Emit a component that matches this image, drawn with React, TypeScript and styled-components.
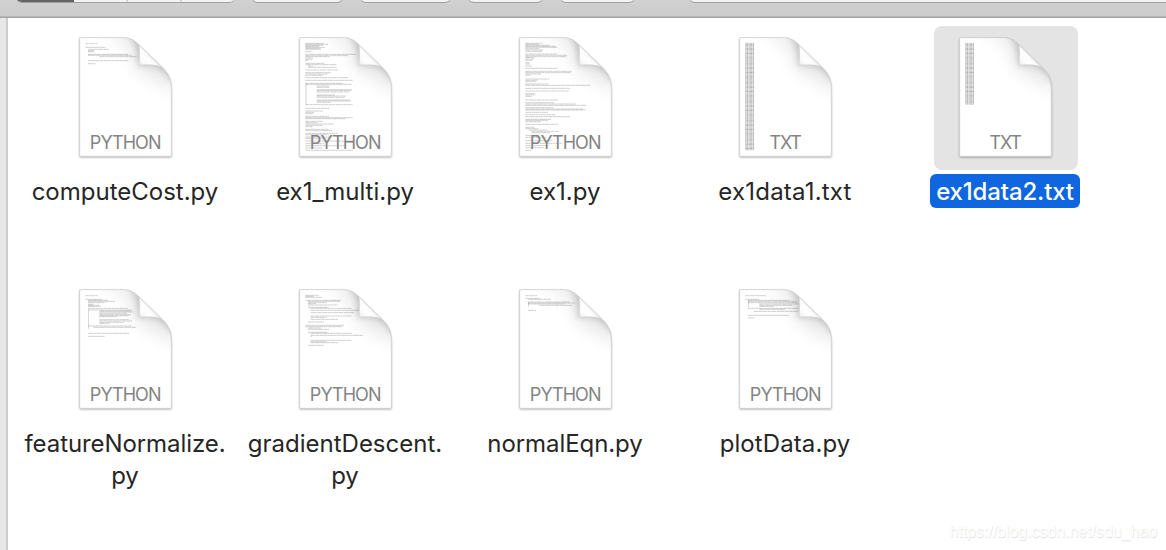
import React from 'react';
import styled, { createGlobalStyle, css } from 'styled-components';

const GlobalStyle = createGlobalStyle`
  *, *::before, *::after { box-sizing: border-box; }
  html, body { margin: 0; padding: 0; overflow: hidden; background: #fff; }
  body { font-family: Inter, "Liberation Sans", sans-serif; color: #262626; }
`;

const Window = styled.div`
  position: relative;
  display: flex;
  flex-direction: column;
  width: 1166px;
  height: 550px;
  overflow: hidden;
  background: #fff;
`;

const Toolbar = styled.header`
  display: flex;
  align-items: flex-start;
  flex: none;
  height: 18px;
  padding-left: 16px;
  overflow: hidden;
  background: linear-gradient(#d1d1d1, #cbcbcb);
  border-bottom: 1px solid #a3a3a3;
  box-shadow: inset 0 -1px 0 #b5b5b5;
`;

const ToolGroup = styled.div<{ $width: number; $gap: number }>`
  display: flex;
  flex: none;
  width: ${(p) => p.$width}px;
  height: 12px;
  margin-top: -10px;
  margin-right: ${(p) => p.$gap}px;
  border-radius: 7px;
  overflow: hidden;
  background: #f4f4f4;
  box-shadow: 0 1px 0 #a0a0a0, 0 0 0 0.5px #b4b4b4;
`;

const Segment = styled.div<{ $width: number; $active?: boolean }>`
  width: ${(p) => p.$width}px;
  background: ${(p) => (p.$active ? '#646464' : '#f4f4f4')};
  border-right: ${(p) => (p.$active ? '0' : '2px solid #d7d7d7')};
  &:last-child { border-right: 0; }
`;

const Body = styled.div`
  display: flex;
  flex: 1;
  min-height: 0;
`;

const SidebarEdge = styled.aside`
  flex: none;
  width: 8px;
  background: #e8e8e8;
  border-right: 2px solid #cdcdcd;
`;

const FileGrid = styled.main`
  display: grid;
  grid-template-columns: repeat(5, 220px);
  grid-auto-rows: 252px;
  padding: 8px 0 0 7px;
`;

const FileItem = styled.figure`
  display: flex;
  flex-direction: column;
  align-items: center;
  margin: 0;
`;

const IconFrame = styled.div<{ $selected?: boolean }>`
  display: flex;
  justify-content: center;
  width: 144px;
  height: 144px;
  margin-left: 2px;
  padding-top: 4px;
  padding-right: 2px;
  border-radius: 8px;
  background: ${(p) => (p.$selected ? '#e4e4e4' : 'transparent')};
`;

const FileIcon = styled.svg`
  display: block;
  width: 110px;
  height: 135px;
`;

const FileLabel = styled.figcaption<{ $selected?: boolean; $tracking: number }>`
  margin-top: 4px;
  padding: 2px 6px 0;
  border-radius: 6px;
  font-size: 24px;
  line-height: 32px;
  letter-spacing: ${(p) => p.$tracking}px;
  text-align: center;
  white-space: pre-line;
  ${(p) => p.$selected && css`
    color: #fff;
    background: #0f66de;
    font-weight: 500;
  `}
`;

const Watermark = styled.div`
  position: absolute;
  right: 9px;
  bottom: 8px;
  font: 16px/20px "Liberation Sans", Arial, sans-serif;
  letter-spacing: -0.05px;
  color: #fefefe;
  text-shadow: 0.5px 0.5px 1px #dedede;
`;

/* One printed line: y, start x, end x. */
type Line = [number, number, number];

const computeCost: Line[] = [
  [41, 46, 83], [52, 46, 107], [58, 54, 117], [62, 54, 74], [65, 54, 72],
  [73, 54, 174], [76, 54, 185], [80, 88, 200], [92, 54, 175], [101, 54, 77],
];

const multi: Line[] = [
  [40, 46, 100], [43, 46, 114], [46, 46, 98], [49, 46, 87], [52, 46, 104], [55, 46, 92], [58, 46, 92], [65, 46, 67],
  [73, 46, 198], [77, 46, 174], [80, 46, 119], [84, 46, 69], [88, 46, 67], [92, 46, 54],
  [100, 46, 103], [104, 46, 139], [108, 54, 69], [112, 54, 140], [120, 46, 144],
  [128, 46, 124], [132, 46, 112], [136, 46, 99], [143, 46, 174], [151, 46, 188],
  [160, 46, 160], [163, 46, 185], [168, 80, 118], [172, 80, 117], [179, 80, 186], [182, 80, 183], [186, 80, 176],
  [195, 80, 135], [198, 80, 168], [202, 80, 164], [210, 80, 180], [213, 80, 183], [217, 80, 121], [224, 46, 188],
  [235, 46, 119], [243, 46, 99], [247, 46, 72], [251, 46, 69], [259, 46, 117], [263, 46, 188], [266, 46, 167],
  [274, 46, 99], [278, 46, 82], [282, 46, 132], [286, 46, 98], [290, 46, 67], [298, 46, 116], [302, 46, 127],
  [310, 46, 144], [314, 46, 116], [321, 46, 129], [325, 46, 110], [333, 46, 188], [341, 46, 104], [347, 46, 170], [354, 46, 98], [361, 46, 188],
];

const ex1: Line[] = [
  [40, 46, 98], [43, 46, 87], [46, 46, 119], [49, 46, 137], [52, 46, 141], [56, 46, 89], [60, 46, 99], [64, 46, 97],
  [72, 46, 142], [76, 46, 172], [80, 46, 169], [83, 46, 73], [87, 46, 72], [91, 46, 67],
  [98, 46, 58], [102, 46, 60], [108, 46, 67], [115, 46, 143], [124, 46, 185], [128, 46, 183], [132, 46, 93], [136, 46, 61],
  [147, 46, 118], [151, 46, 83], [155, 46, 77], [162, 46, 114], [166, 46, 242], [175, 46, 181], [183, 46, 178],
  [191, 46, 76], [195, 46, 74], [199, 46, 66], [210, 46, 144], [218, 46, 131], [222, 46, 198], [226, 46, 228],
  [233, 46, 131], [237, 46, 220], [240, 46, 228], [247, 46, 115], [254, 46, 137], [260, 46, 180], [268, 46, 123], [271, 46, 114], [275, 46, 94],
  [283, 46, 144], [292, 46, 74], [296, 46, 84], [300, 56, 110], [304, 64, 146], [308, 64, 119], [316, 46, 90],
  [322, 46, 110], [332, 46, 129], [340, 46, 157], [347, 46, 118], [353, 46, 101], [361, 46, 66],
];

const normalize: Line[] = [
  [41, 46, 83], [52, 46, 96], [55, 54, 113], [58, 54, 135], [62, 54, 106], [67, 54, 71], [70, 54, 87], [73, 54, 92],
  [79, 54, 174], [84, 54, 187], [87, 88, 184], [90, 88, 192], [94, 88, 171], [98, 88, 183], [101, 88, 176], [104, 88, 141],
  [113, 88, 176], [117, 88, 186], [121, 88, 161], [125, 88, 119], [132, 54, 186], [136, 71, 198], [154, 54, 177], [163, 54, 104],
];

const descent: Line[] = [
  [40, 46, 86], [43, 46, 72], [46, 46, 96], [55, 46, 152], [58, 54, 150], [62, 54, 111], [65, 54, 79], [69, 54, 143],
  [76, 54, 115], [79, 62, 184], [85, 62, 208], [92, 62, 192], [102, 62, 185], [106, 62, 111], [112, 62, 144], [120, 54, 102],
  [130, 46, 162], [134, 46, 157], [138, 54, 94], [142, 54, 117], [151, 54, 114], [154, 62, 185], [160, 62, 219], [163, 62, 66],
  [175, 62, 185], [179, 62, 110], [182, 62, 144], [190, 54, 102],
];

const normalEqn: Line[] = [
  [41, 46, 81], [49, 46, 89], [52, 54, 122], [60, 54, 177], [63, 54, 196], [66, 54, 163], [70, 88, 186], [85, 54, 78],
];

const plotData: Line[] = [
  [41, 46, 108], [52, 46, 87], [55, 54, 179], [58, 54, 200], [62, 54, 202], [66, 88, 206], [70, 88, 185], [73, 88, 131],
  [79, 54, 205], [82, 88, 165], [88, 71, 205], [100, 54, 177], [108, 54, 74],
];

const columnData = (lastY: number): Line[] => {
  const lines: Line[] = [];
  for (let y = 40; y < lastY; y += 3.8) lines.push([y, 46, 73]);
  return lines;
};

type Kind = 'PYTHON' | 'TXT';
interface FileEntry {
  name: string;
  kind: Kind;
  lines: Line[];
  tracking: number;
  selected?: boolean;
  guides?: [number, number, number][];
}

const files: FileEntry[] = [
  { name: 'computeCost.py', kind: 'PYTHON', lines: computeCost, tracking: 0 },
  { name: 'ex1_multi.py', kind: 'PYTHON', lines: multi, tracking: 0, guides: [[48, 160, 223]] },
  { name: 'ex1.py', kind: 'PYTHON', lines: ex1, tracking: 0 },
  { name: 'ex1data1.txt', kind: 'TXT', lines: columnData(363), tracking: 0.2 },
  { name: 'ex1data2.txt', kind: 'TXT', lines: columnData(226), tracking: -0.15, selected: true },
  { name: 'featureNormalize.\npy', kind: 'PYTHON', lines: normalize, tracking: -0.08, guides: [[55, 82, 140]] },
  { name: 'gradientDescent.\npy', kind: 'PYTHON', lines: descent, tracking: 0 },
  { name: 'normalEqn.py', kind: 'PYTHON', lines: normalEqn, tracking: -0.08, guides: [[55, 60, 75]] },
  { name: 'plotData.py', kind: 'PYTHON', lines: plotData, tracking: 0.1, guides: [[55, 55, 76]] },
];

const SHEET = 'M29 23H158C181 23 193 31 207 45L278 114C297 133 304 151 304 181V379H29Z';
const CURL = 'M207 45L278 114C263 104 245 104 207 105C209 82 210 62 207 45Z';

function IconDefs() {
  return (
    <svg width="0" height="0" style={{ position: 'absolute' }} aria-hidden="true">
      <defs>
        <filter id="drop" x="-10%" y="-10%" width="120%" height="120%">
          <feDropShadow dx="0" dy="3" stdDeviation="3.5" floodColor="#000" floodOpacity="0.42" />
        </filter>
        <filter id="soft" x="-50%" y="-50%" width="200%" height="200%">
          <feGaussianBlur stdDeviation="10" />
        </filter>
        <filter id="wide" x="-50%" y="-50%" width="200%" height="200%">
          <feGaussianBlur stdDeviation="26" />
        </filter>
        <clipPath id="sheet"><path d={SHEET} /></clipPath>
        <linearGradient id="curl" x1="207" y1="105" x2="243" y2="74" gradientUnits="userSpaceOnUse">
          <stop offset="0" stopColor="#e6e6e6" />
          <stop offset="0.3" stopColor="#fafafa" />
          <stop offset="0.7" stopColor="#fff" />
          <stop offset="1" stopColor="#ececec" />
        </linearGradient>
      </defs>
    </svg>
  );
}

function DocumentIcon({ file }: { file: FileEntry }) {
  const isText = file.kind === 'TXT';
  return (
    <FileIcon viewBox="0 0 330 405">
      <path d={SHEET} fill="#fff" filter="url(#drop)" />
      <g clipPath="url(#sheet)">
        <path d="M90 0L330 10V190L215 130L188 98L185 55Z" fill="#000" opacity="0.09" filter="url(#wide)" />
        <path d="M170 14C194 28 206 58 203 108C245 101 280 108 308 158L330 110L210 10Z" fill="#000" opacity="0.17" filter="url(#soft)" />
        {file.lines.map(([y, x, end], i) => (
          <path
            key={i}
            d={`M${x} ${y}H${end}`}
            stroke="#555"
            strokeOpacity={isText ? 0.48 + (i % 3) * 0.08 : 0.5}
            strokeWidth={isText ? 2.6 : 1.7}
            strokeDasharray={isText ? '3 1 4 1.5 3 1' : `${9 + (i % 4) * 3} 1 ${5 + (i % 3) * 4} 1`}
          />
        ))}
        {file.guides?.map(([x, top, bottom]) => (
          <path key={x} d={`M${x} ${top}V${bottom}`} stroke="#888" strokeWidth="1.6" opacity="0.7" />
        ))}
      </g>
      <path d={SHEET} fill="none" stroke="#bdbdbd" strokeWidth="1.8" />
      <path d={CURL} fill="url(#curl)" stroke="#cfcfcf" strokeWidth="1.5" />
      <text
        x="167"
        y="357"
        textAnchor="middle"
        textLength={isText ? 97 : 215}
        fontFamily="Inter, sans-serif"
        fontSize="54"
        fontWeight="400"
        fill="#848484"
      >
        {file.kind}
      </text>
    </FileIcon>
  );
}

export default function App() {
  return (
    <Window>
      <GlobalStyle />
      <IconDefs />
      <Toolbar>
        <ToolGroup $width={219} $gap={17}>
          <Segment $width={58} $active />
          <Segment $width={54} />
          <Segment $width={54} />
          <Segment $width={53} />
        </ToolGroup>
        <ToolGroup $width={91} $gap={17} />
        <ToolGroup $width={91} $gap={17} />
        <ToolGroup $width={75} $gap={17} />
        <ToolGroup $width={75} $gap={54} />
        <ToolGroup $width={500} $gap={0} />
      </Toolbar>
      <Body>
        <SidebarEdge />
        <FileGrid>
          {files.map((file) => (
            <FileItem key={file.name}>
              <IconFrame $selected={file.selected}>
                <DocumentIcon file={file} />
              </IconFrame>
              <FileLabel $selected={file.selected} $tracking={file.tracking}>{file.name}</FileLabel>
            </FileItem>
          ))}
        </FileGrid>
      </Body>
      <Watermark>https://blog.csdn.net/sdu_hao</Watermark>
    </Window>
  );
}
